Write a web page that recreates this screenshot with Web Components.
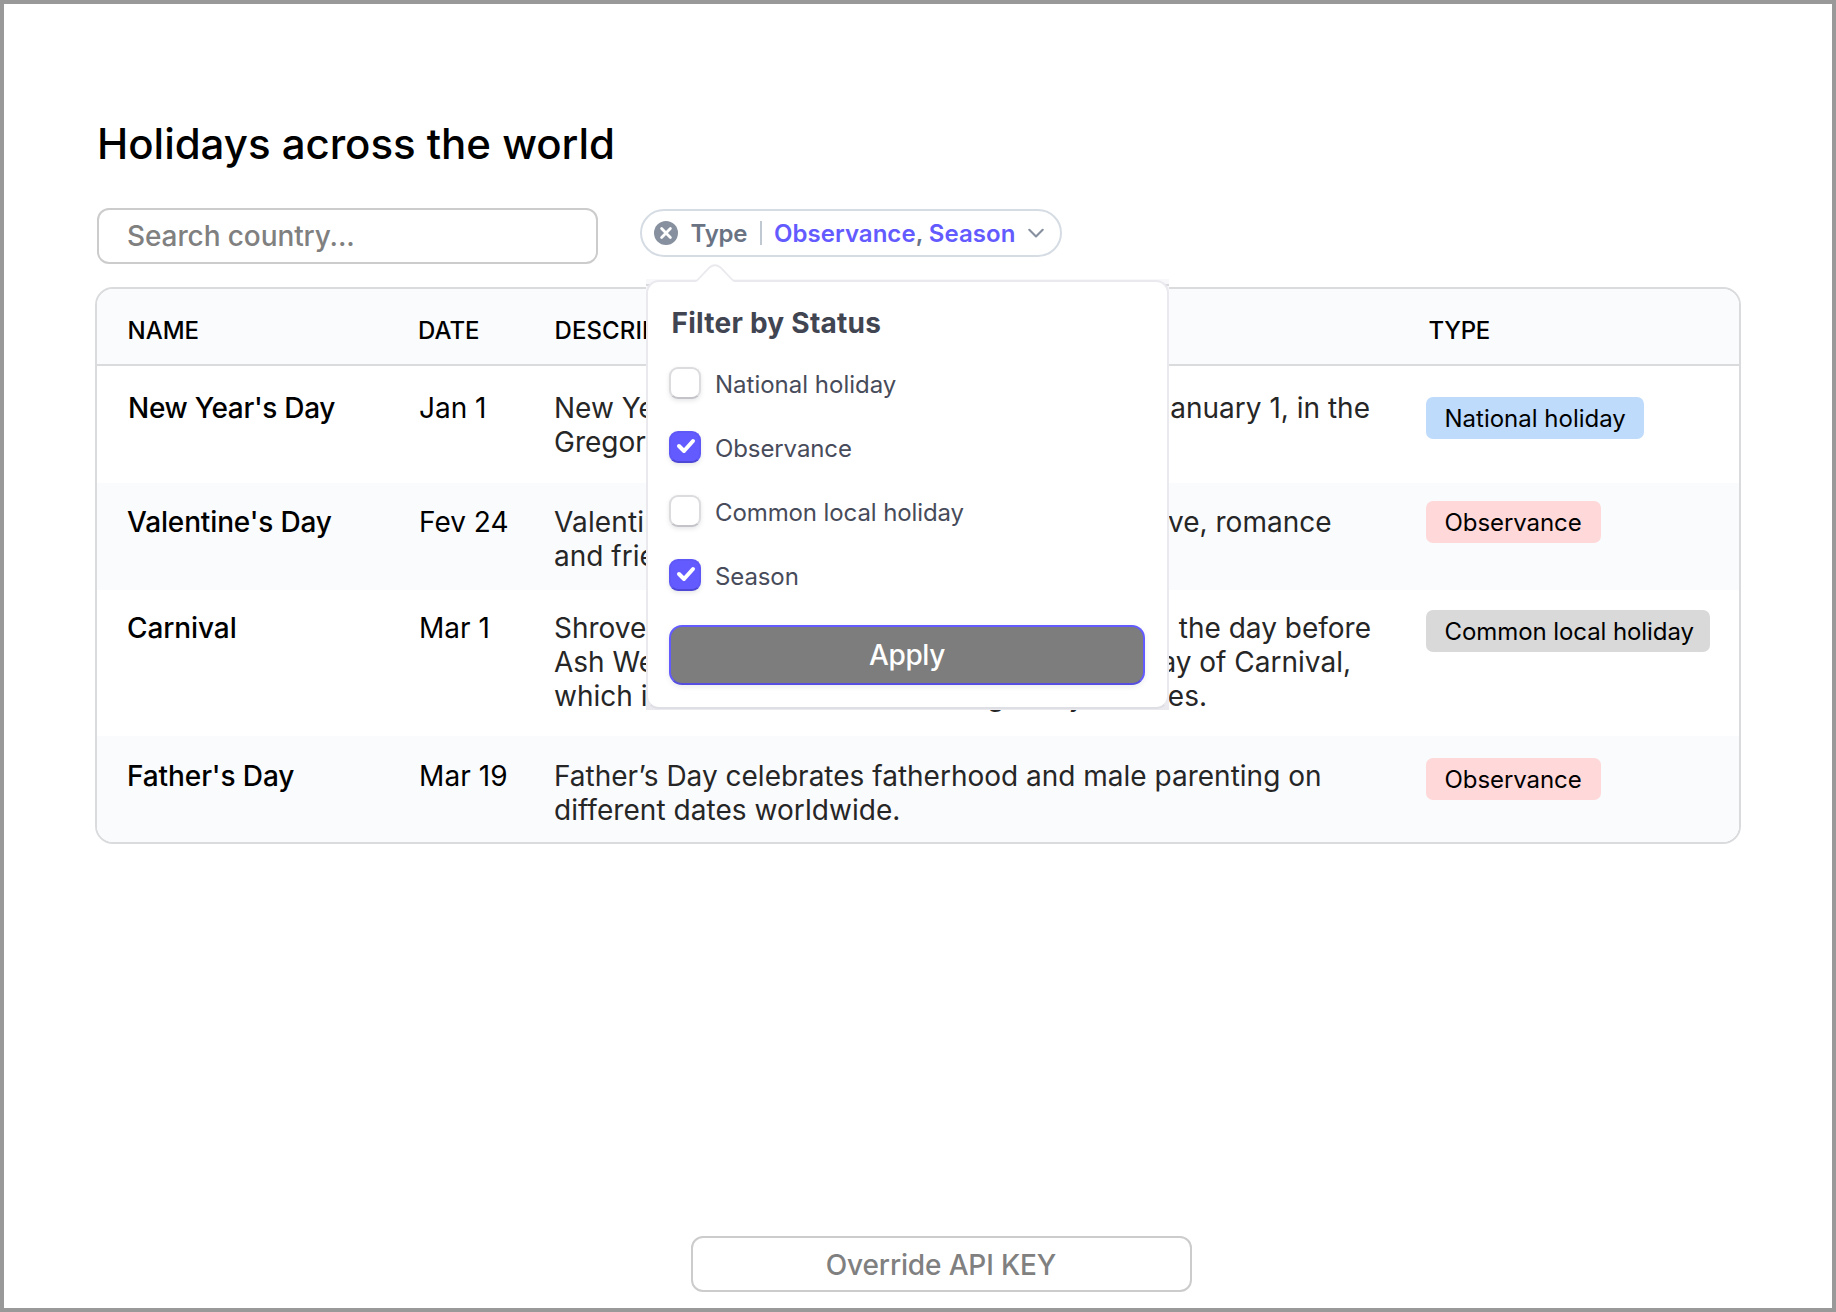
<!DOCTYPE html>
<html lang="en">
<head>
<meta charset="utf-8">
<title>Holidays across the world</title>
<style>
  html, body { margin: 0; height: 100%; }
  body { font-family: Inter, "Liberation Sans", sans-serif; color: #000; background: #fff; overflow: hidden; }
</style>
</head>
<body>
<holiday-app></holiday-app>
<script>
const define = (name, html) => customElements.define(name, class extends HTMLElement {
  constructor() {
    super();
    const t = document.createElement('template');
    t.innerHTML = html;
    this.attachShadow({ mode: 'open' }).append(t.content.cloneNode(true));
  }
});

define('field-box', `
<style>
  :host { display: flex; box-sizing: border-box; width: 501px; height: 56px; border: 2px solid #ccc; border-radius: 12px;
    font-size: 28px; line-height: 34px; font-weight: 450; color: #808080; background: #fff; }
</style>
<slot></slot>`);

define('type-badge', `
<style>
  :host { display: block; box-sizing: border-box; width: max-content; height: 42px; padding: 7px 18.500px 0 18.500px; border-radius: 7px;
    font-size: 24px; line-height: 29px; color: #000; background: #ffd8d9; }
  :host([kind="national"]) { background: #bedbfc; }
  :host([kind="common"]) { background: #d9d9d9; padding-right: 16.500px; letter-spacing: -.08px; }
  :host([kind="observance"]) { letter-spacing: -.08px; padding-right: 19.500px; }
</style>
<slot></slot>`);

define('table-head', `
<style>
  :host { display: grid; box-sizing: border-box; grid-template-columns: 290.500px 136.500px 874px 1fr; height: 77px; padding: 27px 0 0 30.500px;
    background: #fafbfd; border-bottom: 2px solid #dadbdd; font-size: 24px; line-height: 29px; font-weight: 450; letter-spacing: 0; }
</style>
<slot></slot>`);

define('table-row', `
<style>
  :host { display: grid; box-sizing: border-box; grid-template-columns: 292px 135px 872px 1fr; padding-left: 30px;
    font-size: 28px; line-height: 34px; background: #fff; }
  :host([alt]) { background: #fafbfd; }
  .name { font-weight: 500; }
  .desc { color: #262626; }
</style>
<div class="name"><slot name="name"></slot></div>
<div><slot name="date"></slot></div>
<div class="desc"><slot name="desc"></slot></div>
<div><slot name="type"></slot></div>`);

/* One description line: the tail is set flush with the end of the measure. */
define('text-line', `
<style>
  :host { display: flex; justify-content: space-between; white-space: pre; }
</style>
<span><slot></slot></span><span><slot name="end"></slot></span>`);

define('filter-chip', `
<style>
  :host { display: flex; align-items: center; box-sizing: border-box; width: 422px; height: 48px; padding: 0 0 0 12px; margin-top: 1px;
    border: 2px solid #d6dce3; border-radius: 24px; background: #fff; font-size: 24px; line-height: 29px; font-weight: 600; color: #6a7383; }
  .x { margin-right: 12.500px; flex: none; }
  .label { width: 57.500px; letter-spacing: -.2px; }
  .bar { width: 2px; height: 24px; margin: 0 12px 0 12px; background: #c0c8d2; }
  b { font-weight: 600; color: #635bff; letter-spacing: .04px; }
  .chev { margin-left: 13px; flex: none; }
</style>
<svg class="x" width="24" height="24" viewBox="0 0 24 24"><circle cx="12" cy="12" r="12" fill="#87909f"/><path d="M7.6 7.6l8.8 8.8M16.4 7.6l-8.8 8.8" stroke="#fff" stroke-width="2.8" stroke-linecap="round"/></svg>
<span class="label">Type</span><span class="bar"></span>
<span><b>Observance</b>, <b>Season</b></span>
<svg class="chev" width="16" height="10" viewBox="0 0 16 10"><path d="M1.3 1.8L8 8.500l6.700-6.700" fill="none" stroke="#87909f" stroke-width="2.100" stroke-linecap="round" stroke-linejoin="round"/></svg>`);

define('check-option', `
<style>
  :host { display: flex; align-items: flex-start; height: 64px; font-size: 24px; line-height: 29px; color: #474b5a; letter-spacing: -.1px; }
  :host(:first-of-type) { letter-spacing: 0; }
  .box { flex: none; box-sizing: border-box; width: 32px; height: 32px; margin-right: 14px; border-radius: 9px; background: #fff;
    border: 2px solid #dcdcdf; border-bottom-color: #c4c4c8; box-shadow: 0 2px 4px rgba(60,66,87,.13); display: grid; place-items: center; }
  svg { display: none; }
  :host([checked]) .box { background: #635bff; border-color: #5f57f6; border-bottom-color: #4f48d6; }
  :host([checked]) svg { display: block; position: relative; top: -1px; left: .5px; }
  .text { padding-top: 3px; }
</style>
<span class="box"><svg width="20" height="20" viewBox="0 0 20 20"><path d="M3 10l5 5L17 5" fill="none" stroke="#fff" stroke-width="4" stroke-linecap="round" stroke-linejoin="round"/></svg></span>
<span class="text"><slot></slot></span>`);

define('filter-popover', `
<style>
  :host { display: block; box-sizing: border-box; width: 522.500px; height: 431px; padding-top: 1px;
    background: linear-gradient(#d9dbde, #d9dbde) 0 5px / 100% 2px no-repeat, linear-gradient(#f8f8fa, #f8f8fa) 0 0 / 100% 12px no-repeat, linear-gradient(#fff 90%, #ededf1 97%, #e9e9ee); }
  .panel { box-sizing: border-box; height: 429px; padding: 24px 21px 0 21px; border: 2px solid #e9e9ee; border-bottom-color: #dedee5; border-radius: 13px; background: #fff; }
  .tip { position: absolute; left: 48px; top: -16px; }
  h2 { margin: 0 0 27px 2.500px; font-size: 28px; line-height: 34px; font-weight: 650; letter-spacing: .25px; color: #414552; }
  button { display: block; box-sizing: border-box; width: 476px; height: 60px; margin: 2px 0 0; padding: 0; border: 2px solid #635bff; border-bottom-color: #554ee0;
    border-radius: 13px; background: #7d7d7d; color: #fff; font: 450 28px/34px Inter, sans-serif; letter-spacing: -.4px; box-shadow: 0 2px 5px rgba(60,66,87,.1); }
</style>
<svg class="tip" width="42" height="20" viewBox="0 0 42 20"><path d="M1 20C3 18 4 17 5 16L16 4.500Q21 0 26 4.500L37 16C38 17 39 18 41 20Z" fill="#fff"/><path d="M2.500 18L15.500 4.500Q21 0 26.500 4.500L39.500 18" fill="none" stroke="#e9e9ee" stroke-width="1.800"/></svg>
<div class="panel">
  <h2>Filter by Status</h2>
  <check-option>National holiday</check-option>
  <check-option checked>Observance</check-option>
  <check-option>Common local holiday</check-option>
  <check-option checked>Season</check-option>
  <button>Apply</button>
</div>`);

define('holiday-app', `
<style>
  :host { display: flex; flex-direction: column; position: relative; box-sizing: border-box; width: 1836px; height: 1312px; border: 4px solid #999; padding: 114px 91px 16px; }
  h1 { margin: 0 0 39px 2px; font-size: 42px; line-height: 51px; font-weight: 500; letter-spacing: -.03px; }
  .tools { display: flex; align-items: flex-start; gap: 42.500px; height: 79px; margin-left: 1.500px; }
  .tools field-box { box-sizing: border-box; padding: 9px 0 0 28.500px; letter-spacing: -.1px; }
  .table { display: block; box-sizing: border-box; width: 1646px; border: 2px solid #dadbdd; border-radius: 18px; overflow: hidden; }
  .r1 { height: 117px; padding-top: 25px; }
  .r2 { height: 107px; padding-top: 22px; }
  .r3 { height: 146px; padding-top: 21px; }
  .r4 { height: 106px; padding-top: 23px; }
  filter-popover { position: absolute; left: 642px; top: 275px; }
  .key { margin: auto 0 0 595.500px; padding-top: 10px; justify-content: center; letter-spacing: -.14px; }
</style>
<h1>Holidays across the world</h1>
<div class="tools"><field-box>Search country...</field-box><filter-chip></filter-chip></div>
<div class="table">
  <table-head><span>NAME</span><span>DATE</span><span style="letter-spacing:.1px">DESCRIPTION</span><span style="letter-spacing:-.3px">TYPE</span></table-head>
  <table-row class="r1">
    <span slot="name" style="letter-spacing:-.3px;margin-left:1px">New Year's Day</span><span slot="date">Jan 1</span>
    <div slot="desc"><text-line style="width:816px"><span>New Year’s Day is the </span><span slot="end"><span style="letter-spacing:-.3px">first day of the year, or </span><span style="letter-spacing:2.500px">J</span>anuary 1, in the</span></text-line><text-line>Gregorian calendar.</text-line></div>
    <type-badge slot="type" kind="national" style="margin-top:6px">National holiday</type-badge>
  </table-row>
  <table-row class="r2" alt>
    <span slot="name" style="letter-spacing:-.15px">Valentine's Day</span><span slot="date">Fev 24</span>
    <div slot="desc"><text-line style="width:777.500px"><span style="letter-spacing:.15px">Valentine’s Day is an occasion </span><span slot="end">to celebrate love, romance</span></text-line><text-line>and friendship.</text-line></div>
    <type-badge slot="type" kind="observance" style="margin-top:-4px">Observance</type-badge>
  </table-row>
  <table-row class="r3">
    <span slot="name" style="letter-spacing:-.1px">Carnival</span><span slot="date">Mar 1</span>
    <div slot="desc"><text-line style="width:817px">Shrove Tuesday (also known as Mardi Gras) is <span slot="end">the day before</span></text-line><text-line style="width:797px">Ash Wednesday. It is celebrated <span slot="end">as the last day of Carnival,</span></text-line><text-line style="width:653px">which is also celebrated <span slot="end">among many cultures.</span></text-line></div>
    <type-badge slot="type" kind="common" style="margin-top:-1px">Common local holiday</type-badge>
  </table-row>
  <table-row class="r4" alt>
    <span slot="name" style="letter-spacing:-.1px">Father's Day</span><span slot="date" style="letter-spacing:.1px">Mar 19</span>
    <div slot="desc"><text-line>Father’s Day celebrates fatherhood and male parenting on</text-line><text-line style="letter-spacing:.05px">different dates worldwide.</text-line></div>
    <type-badge slot="type" kind="observance" style="margin-top:-1px">Observance</type-badge>
  </table-row>
</div>
<filter-popover></filter-popover>
<field-box class="key">Override API KEY</field-box>`);
</script>
</body>
</html>
